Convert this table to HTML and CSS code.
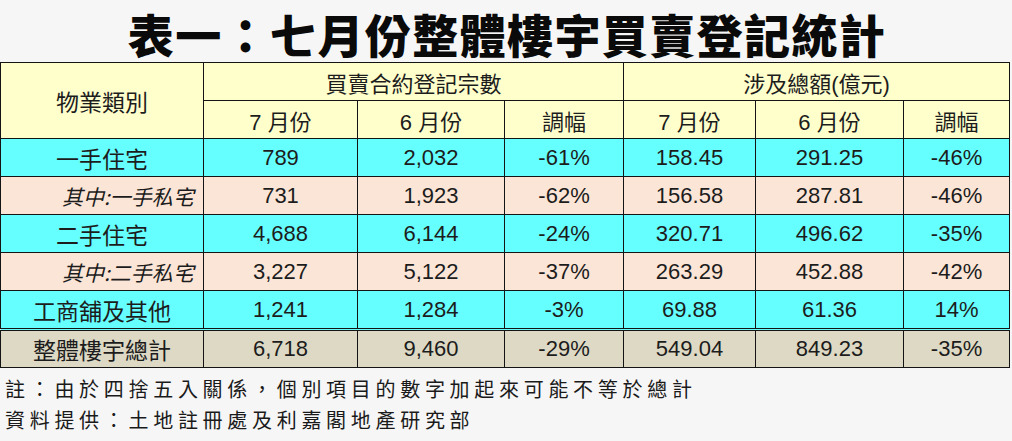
FILE: index.html
```html
<!DOCTYPE html>
<html lang="zh-Hant">
<head>
<meta charset="utf-8">
<title>表一：七月份整體樓宇買賣登記統計</title>
<link rel="stylesheet" href="styles.css">
</head>
<body>
<header class="head">
  <h1 class="title">表一：七月份整體樓宇買賣登記統計</h1>
</header>
<table class="stats">
  <colgroup>
    <col class="c1"><col class="c2"><col class="c3"><col class="c4"><col class="c5"><col class="c6"><col class="c7">
  </colgroup>
  <thead>
    <tr class="hd">
      <th rowspan="2" class="name">物業類別</th>
      <th colspan="3">買賣合約登記宗數</th>
      <th colspan="3">涉及總額(億元)</th>
    </tr>
    <tr class="hd">
      <th>7 月份</th><th>6 月份</th><th>調幅</th>
      <th>7 月份</th><th>6 月份</th><th>調幅</th>
    </tr>
  </thead>
  <tbody>
    <tr class="cyan">
      <td class="name">一手住宅</td><td>789</td><td>2,032</td><td>-61%</td><td>158.45</td><td>291.25</td><td>-46%</td>
    </tr>
    <tr class="pink">
      <td class="name sub">其中:一手私宅</td><td>731</td><td>1,923</td><td>-62%</td><td>156.58</td><td>287.81</td><td>-46%</td>
    </tr>
    <tr class="cyan">
      <td class="name">二手住宅</td><td>4,688</td><td>6,144</td><td>-24%</td><td>320.71</td><td>496.62</td><td>-35%</td>
    </tr>
    <tr class="pink">
      <td class="name sub">其中:二手私宅</td><td>3,227</td><td>5,122</td><td>-37%</td><td>263.29</td><td>452.88</td><td>-42%</td>
    </tr>
    <tr class="cyan">
      <td class="name">工商舖及其他</td><td>1,241</td><td>1,284</td><td>-3%</td><td>69.88</td><td>61.36</td><td>14%</td>
    </tr>
    <tr class="total">
      <td class="name">整體樓宇總計</td><td>6,718</td><td>9,460</td><td>-29%</td><td>549.04</td><td>849.23</td><td>-35%</td>
    </tr>
  </tbody>
</table>
<div class="notes">
  <p>註：由於四捨五入關係，個別項目的數字加起來可能不等於總計</p>
  <p>資料提供：土地註冊處及利嘉閣地產研究部</p>
</div>
</body>
</html>
```

FILE: styles.css
```css
html, body {
  margin: 0;
  padding: 0;
  background: #f6f6f6;
}
body {
  width: 1012px;
  font-family: "Liberation Sans", "Noto Sans CJK TC", sans-serif;
  color: #1c1c1c;
}
.head {
  display: flex;
  justify-content: center;
  align-items: flex-start;
  height: 62px;
  padding-left: 2px;
  box-sizing: border-box;
}
.title {
  margin: 0;
  line-height: normal;
  font-family: "Noto Sans CJK TC", sans-serif;
  font-weight: 900;
  font-size: 46px;
  letter-spacing: 1.4px;
  color: #0a0a0a;
  white-space: nowrap;
}
.stats {
  border-collapse: collapse;
  table-layout: fixed;
  width: 1010px;
  font-size: 22px;
}
.c1 { width: 203px; }
.c2 { width: 154px; }
.c3 { width: 147px; }
.c4 { width: 119px; }
.c5 { width: 132px; }
.c6 { width: 148px; }
.c7 { width: 106px; }
.stats th, .stats td {
  border: 1px solid #141414;
  padding: 0;
  height: 37px;
  text-align: center;
  vertical-align: middle;
  font-weight: normal;
}
.stats th {
  background: #ffffcc;
}
.cyan td { background: #66ffff; }
.pink td { background: #fbe5d6; }
.total td { background: #ddd9c4; }
.total td { border-top: 3px double #141414; height: 36px; }
.stats .name {
  font-family: "Noto Sans CJK TC", sans-serif;
  font-size: 23px;
}
.stats td.sub {
  text-align: left;
  padding-left: 61px;
  font-style: italic;
  font-size: 21px;
}
.notes {
  padding: 5px 0 0 5px;
  font-family: "Noto Sans CJK TC", sans-serif;
  font-size: 20px;
  letter-spacing: 4.7px;
  color: #1a1a1a;
}
.notes p {
  margin: 0;
  line-height: 31px;
}
```
